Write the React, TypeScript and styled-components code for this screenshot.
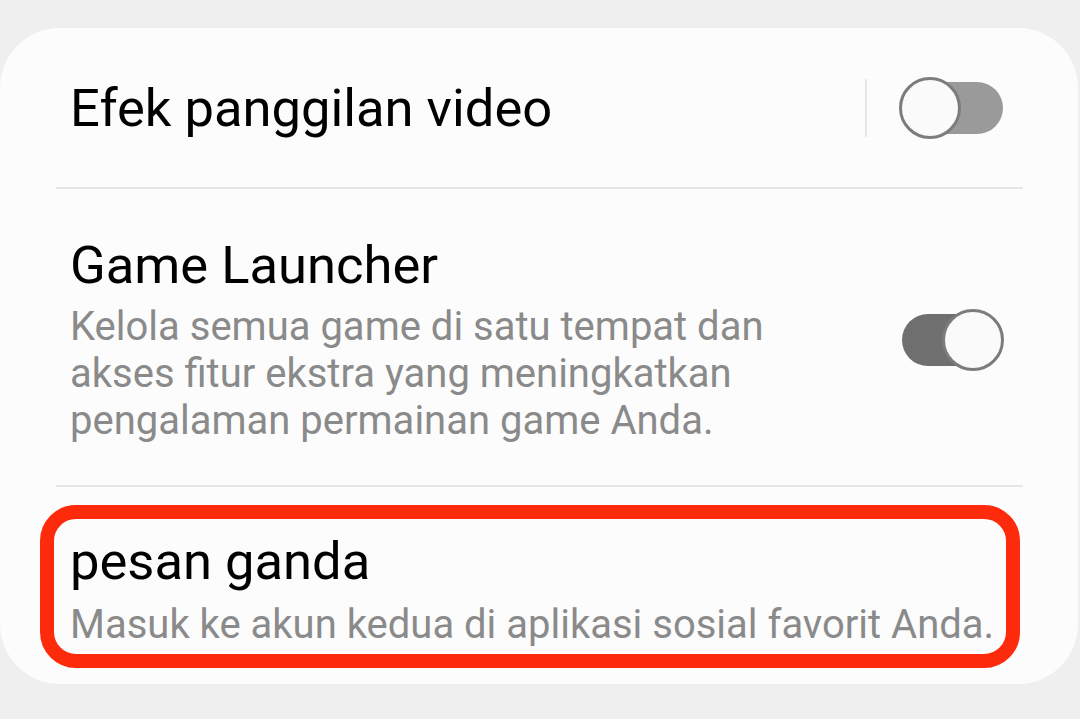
import styled, { createGlobalStyle } from 'styled-components'

const Global = createGlobalStyle`
  body {
    margin: 0;
    background: #efefef;
    font-family: Roboto, 'Noto Sans', sans-serif;
  }
`

const Page = styled.div`
  width: 1080px;
  height: 719px;
  padding-top: 28px;
  box-sizing: border-box;
`

const Card = styled.div`
  width: 1078px;
  height: 656px;
  background: #fcfcfc;
  border-radius: 60px;
  display: flex;
  flex-direction: column;
`

const Row = styled.div<{ $pt?: number; $pb?: number; $h?: number }>`
  position: relative;
  display: flex;
  align-items: center;
  padding: ${(p) => p.$pt ?? 0}px 74px ${(p) => p.$pb ?? 0}px 70px;
  ${(p) => (p.$h ? `height: ${p.$h}px;` : '')}
  box-sizing: border-box;
`

const Texts = styled.div`
  flex: 1;
  display: flex;
  flex-direction: column;
`

const Title = styled.div`
  font-size: 52.5px;
  line-height: 60px;
  color: #000;
`

const Desc = styled.div<{ $mt: number }>`
  margin-top: ${(p) => p.$mt}px;
  font-size: 40px;
  line-height: 47px;
  color: #8a8a8a;
  white-space: nowrap;
`

const Divider = styled.div`
  height: 2px;
  margin: 0 55px 0 56px;
  background: #e6e6e6;
`

const VLine = styled.div`
  width: 2px;
  height: 58px;
  background: #e8e8e8;
  margin-right: 32px;
`

const Switch = styled.div`
  position: relative;
  width: 105px;
  height: 62px;
  flex-shrink: 0;
`

const Track = styled.div<{ $on: boolean }>`
  position: absolute;
  top: 5px;
  left: ${(p) => (p.$on ? 3 : 6)}px;
  width: 98px;
  height: 52px;
  border-radius: 26px;
  background: ${(p) => (p.$on ? '#6f6f6f' : '#9a9a9a')};
`

const Thumb = styled.div<{ $on: boolean }>`
  position: absolute;
  top: 0;
  left: ${(p) => (p.$on ? 43 : 0)}px;
  width: 62px;
  height: 62px;
  box-sizing: border-box;
  border-radius: 50%;
  border: 3px solid #7c7c7c;
  background: #fafafa;
`

const Highlight = styled.div`
  position: absolute;
  top: 18px;
  left: 40px;
  width: 980px;
  height: 163px;
  box-sizing: border-box;
  border: 14px solid #fd2a0c;
  border-radius: 36px;
  pointer-events: none;
`

function Toggle({ on }: { on: boolean }) {
  return (
    <Switch>
      <Track $on={on} />
      <Thumb $on={on} />
    </Switch>
  )
}

export default function App() {
  return (
    <>
      <Global />
      <Page>
        <Card>
          <Row $h={159}>
            <Texts>
              <Title>Efek panggilan video</Title>
            </Texts>
            <VLine />
            <Toggle on={false} />
          </Row>
          <Divider />
          <Row $pt={46} $pb={41}>
            <Texts>
              <Title>Game Launcher</Title>
              <Desc $mt={8}>
                Kelola semua game di satu tempat dan
                <br />
                akses fitur ekstra yang meningkatkan
                <br />
                pengalaman permainan game Anda.
              </Desc>
            </Texts>
            <Toggle on={true} />
          </Row>
          <Divider />
          <Row $pt={44} $pb={35}>
            <Texts>
              <Title>pesan ganda</Title>
              <Desc $mt={10}>Masuk ke akun kedua di aplikasi sosial favorit Anda.</Desc>
            </Texts>
            <Highlight />
          </Row>
        </Card>
      </Page>
    </>
  )
}
